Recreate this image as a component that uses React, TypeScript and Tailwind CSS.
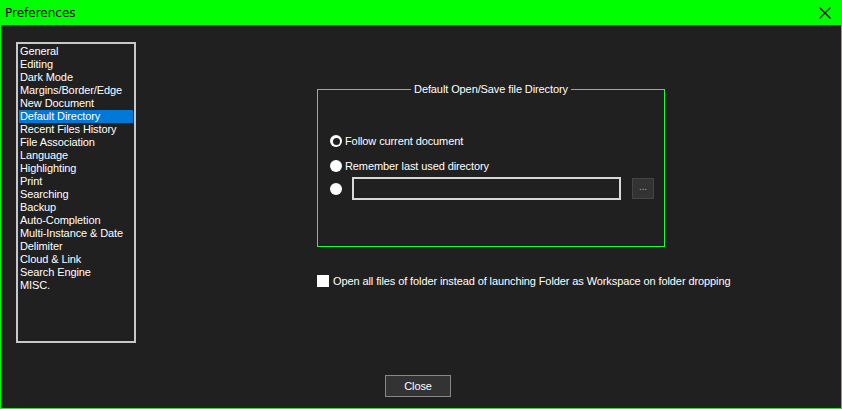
import React from "react";

const ITEMS = [
  "General",
  "Editing",
  "Dark Mode",
  "Margins/Border/Edge",
  "New Document",
  "Default Directory",
  "Recent Files History",
  "File Association",
  "Language",
  "Highlighting",
  "Print",
  "Searching",
  "Backup",
  "Auto-Completion",
  "Multi-Instance & Date",
  "Delimiter",
  "Cloud & Link",
  "Search Engine",
  "MISC.",
];

const SELECTED = "Default Directory";

function Radio({ checked }: { checked?: boolean }) {
  return (
    <span className="flex h-[12px] w-[12px] shrink-0 items-center justify-center rounded-full bg-white">
      {checked && <span className="h-[7px] w-[7px] rounded-full bg-[#202020]" />}
    </span>
  );
}

export default function App() {
  return (
    <div
      className="flex h-[409px] w-[842px] flex-col overflow-hidden border-x border-b border-[#00ff00] bg-[#202020] text-[11px] tracking-[-0.1px] text-white"
      style={{ fontFamily: '"Liberation Sans", Arial, sans-serif' }}
    >
      {/* barre de titre */}
      <div className="flex h-[25px] shrink-0 items-center justify-between bg-[#00ff00] pl-[4px] pr-[10px] text-black">
        <span className="text-[12px] tracking-normal" style={{ fontFamily: '"DejaVu Sans", sans-serif' }}>
          Preferences
        </span>
        <svg width="12" height="12" viewBox="0 0 12 12">
          <path d="M0.5 0.5 L11.5 11.5 M11.5 0.5 L0.5 11.5" stroke="#000" strokeWidth="1.1" />
        </svg>
      </div>

      <div className="flex flex-1 pl-[15px] pt-[17px]">
        {/* liste des catégories */}
        <div className="h-[301px] w-[120px] shrink-0 border-2 border-[#c8c8c8] px-[1px] pt-[1px]">
          {ITEMS.map((it) => (
            <div
              key={it}
              className={
                "h-[13px] whitespace-nowrap pl-[1px] leading-[13px] " +
                (it === SELECTED ? "bg-[#0078d7]" : "")
              }
            >
              {it}
            </div>
          ))}
        </div>

        <div className="flex flex-1 flex-col">
          {/* cadre */}
          <div className="relative ml-[181px] mt-[47px] h-[158px] w-[348px] border border-[#19ff3c]">
            <span className="absolute left-1/2 top-[-8px] -translate-x-1/2 whitespace-nowrap bg-[#202020] px-[3px] leading-[14px]">
              Default Open/Save file Directory
            </span>
            <div className="flex flex-col pl-[12px] pt-[44px]">
              <label className="flex h-[14px] items-center gap-[3px]">
                <Radio checked />
                Follow current document
              </label>
              <label className="mt-[11px] flex h-[14px] items-center gap-[3px]">
                <Radio />
                Remember last used directory
              </label>
              <div className="mt-[4px] flex items-center">
                <Radio />
                <div className="ml-[10px] h-[23px] w-[269px] border-2 border-[#d8d8d8] bg-[#202020]" />
                <div className="ml-[11px] flex h-[21px] w-[22px] items-center justify-center border border-[#444] bg-[#333] pb-[3px] text-[10px] leading-none text-[#aaa]">
                  ...
                </div>
              </div>
            </div>
          </div>

          <label className="ml-[181px] mt-[26px] flex items-center gap-[4px]">
            <span className="h-[12px] w-[12px] bg-white" />
            Open all files of folder instead of launching Folder as Workspace on folder dropping
          </label>
        </div>
      </div>

      <div className="flex shrink-0 justify-start pb-[11px] pl-[384px]">
        <button className="h-[22px] w-[66px] border border-[#888] bg-[#333] text-[11px] text-white">
          Close
        </button>
      </div>
    </div>
  );
}
